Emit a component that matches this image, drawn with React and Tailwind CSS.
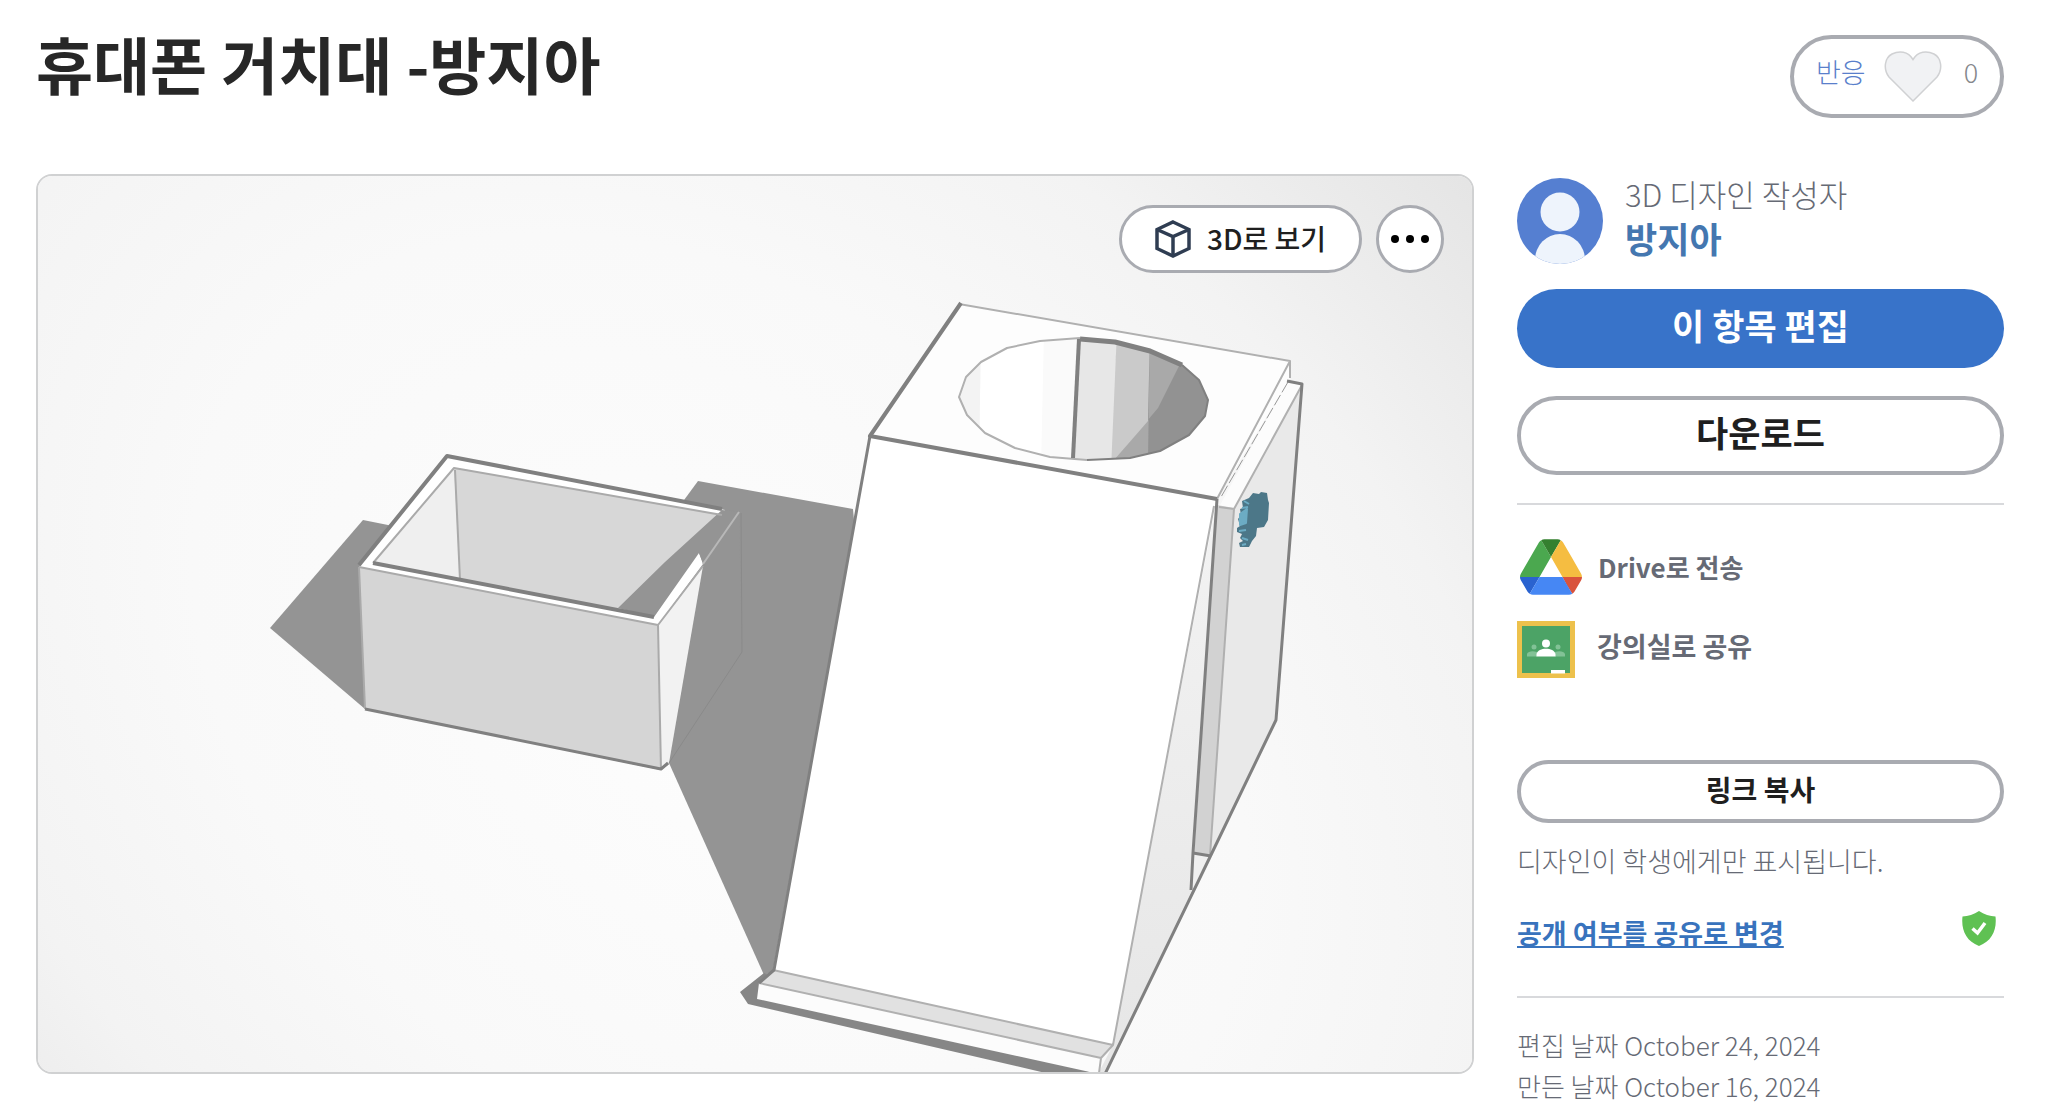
import { useState } from 'react';

const outlineButton =
  'flex w-full items-center justify-center rounded-full border-4 border-[#a9abb1] bg-white font-bold text-[#1f1f1f]';

function HeartIcon() {
  return (
    <svg viewBox="0 0 58 51" className="h-[51px] w-[58px]" aria-hidden="true">
      <path
        d="M29 50L5 26C-1 18 .5 7 8 3C15-.5 24 0 29 8.500C34 0 43-.5 50 3C57.500 7 59 18 53 26Z"
        fill="#f1f2f4"
        stroke="#d0d1d3"
        strokeWidth="1.500"
      />
    </svg>
  );
}

function CubeIcon() {
  return (
    <svg viewBox="0 0 36 38" className="h-[38px] w-9" fill="none" stroke="#2f3d52" strokeWidth="3.500" aria-hidden="true">
      <path d="M18 2L34 9.500V28.500L18 36L2 28.500V9.500Z" />
      <path d="M2 9.500L18 16.500L34 9.500M18 16.500V36" />
    </svg>
  );
}

function Avatar() {
  return (
    <svg viewBox="0 0 86 86" className="size-[86px]" aria-hidden="true">
      <clipPath id="avatar">
        <circle cx="43" cy="43" r="43" />
      </clipPath>
      <g clipPath="url(#avatar)">
        <rect width="86" height="86" fill="#557fd1" />
        <circle cx="43" cy="34" r="19.500" fill="#eef4fc" />
        <ellipse cx="43" cy="82" rx="25" ry="26" fill="#eef4fc" />
      </g>
    </svg>
  );
}

function DriveIcon() {
  return (
    <svg viewBox="0 0 87.3 78" className="h-14 w-[62px]" aria-hidden="true">
      <path d="m6.6 66.850 3.850 6.650c.8 1.400 1.950 2.500 3.300 3.300l13.750-23.800h-27.500c0 1.550.4 3.100 1.200 4.500z" fill="#2a63d0" />
      <path d="m43.650 25-13.750-23.800c-1.350.8-2.500 1.900-3.300 3.300l-25.400 44a9.060 9.060 0 0 0 -1.200 4.500h27.500z" fill="#4ba84f" />
      <path d="m73.550 76.800c1.350-.8 2.500-1.900 3.300-3.300l1.600-2.750 7.650-13.250c.8-1.400 1.200-2.950 1.200-4.500h-27.502l5.852 11.500z" fill="#d9533c" />
      <path d="m43.650 25 13.750-23.800c-1.350-.8-2.900-1.200-4.500-1.200h-18.500c-1.600 0-3.150.45-4.500 1.200z" fill="#34802f" />
      <path d="m59.800 53h-32.300l-13.750 23.800c1.350.8 2.900 1.200 4.500 1.200h50.800c1.600 0 3.150-.45 4.500-1.200z" fill="#4687f4" />
      <path d="m73.400 26.500-12.700-22c-.8-1.400-1.950-2.500-3.300-3.300l-13.750 23.800 16.150 28h27.450c0-1.550-.4-3.100-1.200-4.500z" fill="#f5bd41" />
    </svg>
  );
}

function ClassroomIcon() {
  return (
    <svg viewBox="0 0 58 57" className="h-[57px] w-[58px]" aria-hidden="true">
      <rect width="58" height="57" fill="#edc14c" />
      <rect x="5" y="5" width="48" height="47" fill="#4ca366" />
      <g fill="#82c296">
        <circle cx="17" cy="26" r="2.500" />
        <circle cx="41" cy="26" r="2.500" />
        <path d="M10 35.500V33C11 30 16 29.500 20 31V35.500ZM48 35.500V33C47 30 42 29.500 38 31V35.500Z" />
      </g>
      <circle cx="29" cy="22.500" r="4" fill="#fff" />
      <path d="M19.500 35.500V33C21 26 37 26 38.500 33V35.500Z" fill="#fff" />
      <rect x="34" y="49" width="14" height="3.500" fill="#fff" />
    </svg>
  );
}

function ShieldIcon() {
  return (
    <svg viewBox="0 0 34 35" className="h-[35px] w-[34px]" aria-hidden="true">
      <path d="M17 0C22 3.500 28 5 33.500 5.500C35 19 30 30 17 35C4 30-1 19 .5 5.500C6 5 12 3.500 17 0Z" fill="#5fc153" />
      <path d="M10.500 17.500L15.500 22L23 12" fill="none" stroke="#fff" strokeWidth="3.500" />
    </svg>
  );
}

// Render of the phone stand and the small box next to it
function ModelPreview() {
  return (
    <svg
      viewBox="38 176 1434 896"
      className="block h-full w-full"
      strokeLinejoin="round"
      role="img"
      aria-label="휴대폰 거치대"
    >
      <defs>
        <radialGradient
          id="floor"
          gradientUnits="userSpaceOnUse"
          cx="0"
          cy="0"
          r="1000"
          gradientTransform="translate(720 720) rotate(38) scale(1.3 0.92)"
        >
          <stop offset="0" stopColor="#fdfdfd" />
          <stop offset="0.45" stopColor="#f9f9f9" />
          <stop offset="0.7" stopColor="#f3f3f3" />
          <stop offset="1" stopColor="#e4e4e4" />
        </radialGradient>
        <linearGradient id="side" x1="0" y1="0" x2="0" y2="1">
          <stop offset="0" stopColor="#f3f3f3" />
          <stop offset="1" stopColor="#e6e6e6" />
        </linearGradient>
        <clipPath id="hole">
          <path d="M959 397L966 377L981 362L1007 348L1040 341L1080 338L1115 341L1150 350L1182 364L1199 380L1208 400L1205 416L1189 435L1160 451L1130 458L1087 460L1050 457L1015 448L985 433L967 415Z" />
        </clipPath>
      </defs>
      <rect x="36" y="174" width="1438" height="900" fill="url(#floor)" />

      {/* shadows */}
      <g fill="#949494">
        <path d="M363 520L388 525L450 560L365 709L270 628Z" />
        <path d="M698 481L853 509L870 700L774 972L764 975L669 763L640 560Z" />
        <path d="M740 992L764 973L780 980L1098 1074H1050L748 1004Z" fill="#868686" />
      </g>

      {/* small box */}
      <path d="M447 455L739 512L742 652L668 765L661 770L365 709L359 567Z" fill="#949494" />
      <path d="M447 455L725 510L722 515L699 553L703 564L658 625L359 567Z" fill="#fff" />
      <path d="M359 567L658 625L661 770L365 709Z" fill="#d5d5d5" />
      <path d="M658 625L703 566L669 763L661 770Z" fill="#f2f2f2" />
      <path d="M454 468L722 515L654 617L373 563Z" fill="#d7d7d7" />
      <path d="M454 468L460 580L373 563Z" fill="#efefef" />
      <path d="M722 510L739 512L703 563L699 553L654 617L618 608L665 562Z" fill="#949494" />
      <g fill="none" stroke="#aaa" strokeWidth="2">
        <path d="M373 563L454 468L722 515M455 470L460 580M359 567L658 625L703 566M359 567L365 709M658 625L661 770" />
        <path d="M739 512L703 564" stroke="#b8b8b8" />
        <path d="M741 513L742 652L669 763" stroke="#8a8a8a" strokeWidth="1" />
      </g>
      <g fill="none" stroke="#808080" strokeWidth="4">
        <path d="M359 565L447 456L722 509M373 563L654 617" />
        <path d="M365 709L661 769L668 763" strokeWidth="3" />
      </g>

      {/* back plate */}
      <path d="M1287 382L1302 385L1234 510L1219 507Z" fill="#fcfcfc" />
      <path d="M1302 385L1276 720L1210 857L1234 510Z" fill="#e9e9e9" />
      <path d="M1217 505L1234 508L1210 856L1193 853Z" fill="#d2d2d2" />
      <path d="M1193 853L1210 856L1191 892Z" fill="#f0f0f0" />

      {/* stand */}
      <path d="M959 304L1290 361L1290 378L1217 499L870 436Z" fill="#fdfdfd" />
      <path d="M870 436L1217 499L1113 1045L773 970Z" fill="#fff" />
      <path d="M1217 499L1192 890L1105 1074H1098L1113 1045Z" fill="url(#side)" />
      <path d="M773 970L1113 1045L1101 1058L759 983Z" fill="#e1e1e1" />
      <path d="M759 983L1101 1058L1099 1074L757 999Z" fill="#fcfcfc" />

      {/* cup hole */}
      <g clipPath="url(#hole)">
        <rect x="950" y="330" width="270" height="140" fill="#929292" />
        <path d="M1150 330H1200L1178 368L1158 408L1115 459H1148Z" fill="#a9a9a9" />
        <path d="M1117 330H1150L1148 421L1115 459L1108 470Z" fill="#cacaca" />
        <path d="M1079 330H1117L1111 470H1073Z" fill="#e7e7e7" />
        <path d="M950 330H1079L1073 470H950Z" fill="#fafafa" />
        <path d="M981 330H1044L1041 470H979Z" fill="#fff" />
        <path d="M950 330H981L979 470H950Z" fill="#f3f3f3" />
      </g>
      <g fill="none" stroke="#808080">
        <path
          d="M1080 338L1040 341L1007 348L981 362L966 377L959 397L967 415L985 433L1015 448L1050 457L1087 460"
          stroke="#b0b0b0"
          strokeWidth="2"
        />
        <path d="M1080 339L1115 342L1150 351L1182 365" strokeWidth="5" />
        <path d="M1182 365L1199 380L1208 400L1205 416L1189 435L1160 451L1130 458L1087 460" strokeWidth="2" />
        <path d="M1079 339L1073 458" strokeWidth="4" />
      </g>

      {/* edges */}
      <g fill="none" stroke="#b0b0b0" strokeWidth="2">
        <path d="M959 304L1290 361L1290 378M1290 361L1217 499M1302 385L1234 509L1219 507M1234 509L1210 856" />
        <path d="M1288 382L1221 497" stroke="#999" strokeWidth="1" strokeDasharray="12 3" />
        <path d="M1214 506L1113 1045M773 970L1113 1045L1101 1058L759 983M1101 1058L1099 1073" />
      </g>
      <g fill="none" stroke="#808080" strokeWidth="3">
        <path d="M961 303L870 436L1217 499" strokeWidth="4" />
        <path d="M870 436L774 970L759 983" />
        <path d="M1287 381L1302 384L1276 720L1210 857L1105 1074" />
        <path d="M1217 499L1207 647L1193 853L1191 890" />
        <path d="M1193 853L1211 856" />
      </g>

      {/* gear */}
      <path
        d="M1249 498L1253 493L1259 494L1261 492L1267 493L1268 500L1269 503L1268 520L1264 527L1257 528L1256 536L1252 541L1249 547H1240L1239 543L1243 541L1240 538L1242 534L1237 532V528L1240 526L1238 519L1241 515L1240 509L1243 508L1242 501Z"
        fill="#4c7788"
      />
      <path
        d="M1240 514L1247 509L1246 523L1240 525ZM1244 501L1249 504M1242 508L1248 507M1239 531L1246 530M1242 538L1248 540M1242 545L1246 544"
        fill="#6cacc4"
        stroke="#6cacc4"
        strokeWidth="2"
      />
    </svg>
  );
}

export default function App() {
  const [likes, setLikes] = useState(0);

  return (
    <main className="bg-white pt-[35px] pr-11 pl-9 font-['Noto_Sans_CJK_KR',sans-serif] text-[#666a75]">
      <header className="flex items-start justify-between">
        <h1 className="text-[62px] leading-[56px] font-bold text-[#272727]">휴대폰 거치대 -방지아</h1>
        <button
          type="button"
          onClick={() => setLikes(likes === 0 ? 1 : 0)}
          className="flex h-[83px] w-[214px] items-center gap-[18px] rounded-full border-4 border-[#a9abb1] pl-[22px] text-[27px] font-light"
        >
          <span className="pb-2 text-[#5a7fcb]">반응</span>
          <HeartIcon />
          <span className="pb-2 pl-1 text-[#85878c]">{likes}</span>
        </button>
      </header>

      <div className="mt-14 grid grid-cols-[minmax(0,1fr)_487px] items-start gap-[43px]">
        <section className="relative aspect-[1438/900] overflow-hidden rounded-2xl border-2 border-[#d0d1d2]">
          <ModelPreview />
          <div className="absolute top-[29px] right-7 flex gap-3.5">
            <button
              type="button"
              className="flex h-17 w-[243px] items-center justify-center gap-4 rounded-full border-3 border-[#a9abb1] bg-white text-[28px] font-medium text-[#1f1f1f]"
            >
              <CubeIcon />
              <span className="pb-0.5">3D로 보기</span>
            </button>
            <button
              type="button"
              aria-label="더 보기"
              className="flex size-17 items-center justify-center gap-[7px] rounded-full border-3 border-[#a9abb1] bg-white"
            >
              <span className="size-2 rounded-full bg-black" />
              <span className="size-2 rounded-full bg-black" />
              <span className="size-2 rounded-full bg-black" />
            </button>
          </div>
        </section>

        <aside className="pt-1">
          <div className="flex gap-[22px]">
            <Avatar />
            <div>
              <p className="text-[31px] leading-8 font-light">3D 디자인 작성자</p>
              <a href="#author" className="mt-2 block text-[35px] leading-10 font-bold text-[#4477b0]">
                방지아
              </a>
            </div>
          </div>

          <button
            type="button"
            className="mt-[25px] flex h-[79px] w-full items-center justify-center rounded-full bg-[#3873c9] pb-1.5 text-[35px] font-bold text-white"
          >
            이 항목 편집
          </button>
          <button type="button" className={`${outlineButton} mt-7 h-[79px] pb-1.5 text-[35px]`}>
            다운로드
          </button>

          <hr className="mt-7 border-t-2 border-[#d8d9dc]" />

          <div className="mt-[34px] flex flex-col items-start gap-[26px] text-[26px] font-bold">
            <button type="button" className="flex items-center gap-4 pl-[3px]">
              <DriveIcon />
              <span className="pb-0.5">Drive로 전송</span>
            </button>
            <button type="button" className="flex items-center gap-[22px] text-[27px]">
              <ClassroomIcon />
              <span className="pb-1.5">강의실로 공유</span>
            </button>
          </div>

          <button type="button" className={`${outlineButton} mt-[82px] h-[63px] pb-1.5 text-[28px]`}>
            링크 복사
          </button>

          <p className="mt-5 text-[27px] leading-9 font-light">디자인이 학생에게만 표시됩니다.</p>
          <div className="mt-8 flex items-start justify-between pr-2">
            <a href="#visibility" className="pt-1 text-[27px] leading-9 font-bold text-[#3873bd] underline">
              공개 여부를 공유로 변경
            </a>
            <ShieldIcon />
          </div>

          <hr className="mt-[45px] border-t-2 border-[#d8d9dc]" />

          <div className="mt-[26px] text-[26px] leading-[41px] font-light">
            <p>편집 날짜 October 24, 2024</p>
            <p>만든 날짜 October 16, 2024</p>
          </div>
        </aside>
      </div>
    </main>
  );
}
